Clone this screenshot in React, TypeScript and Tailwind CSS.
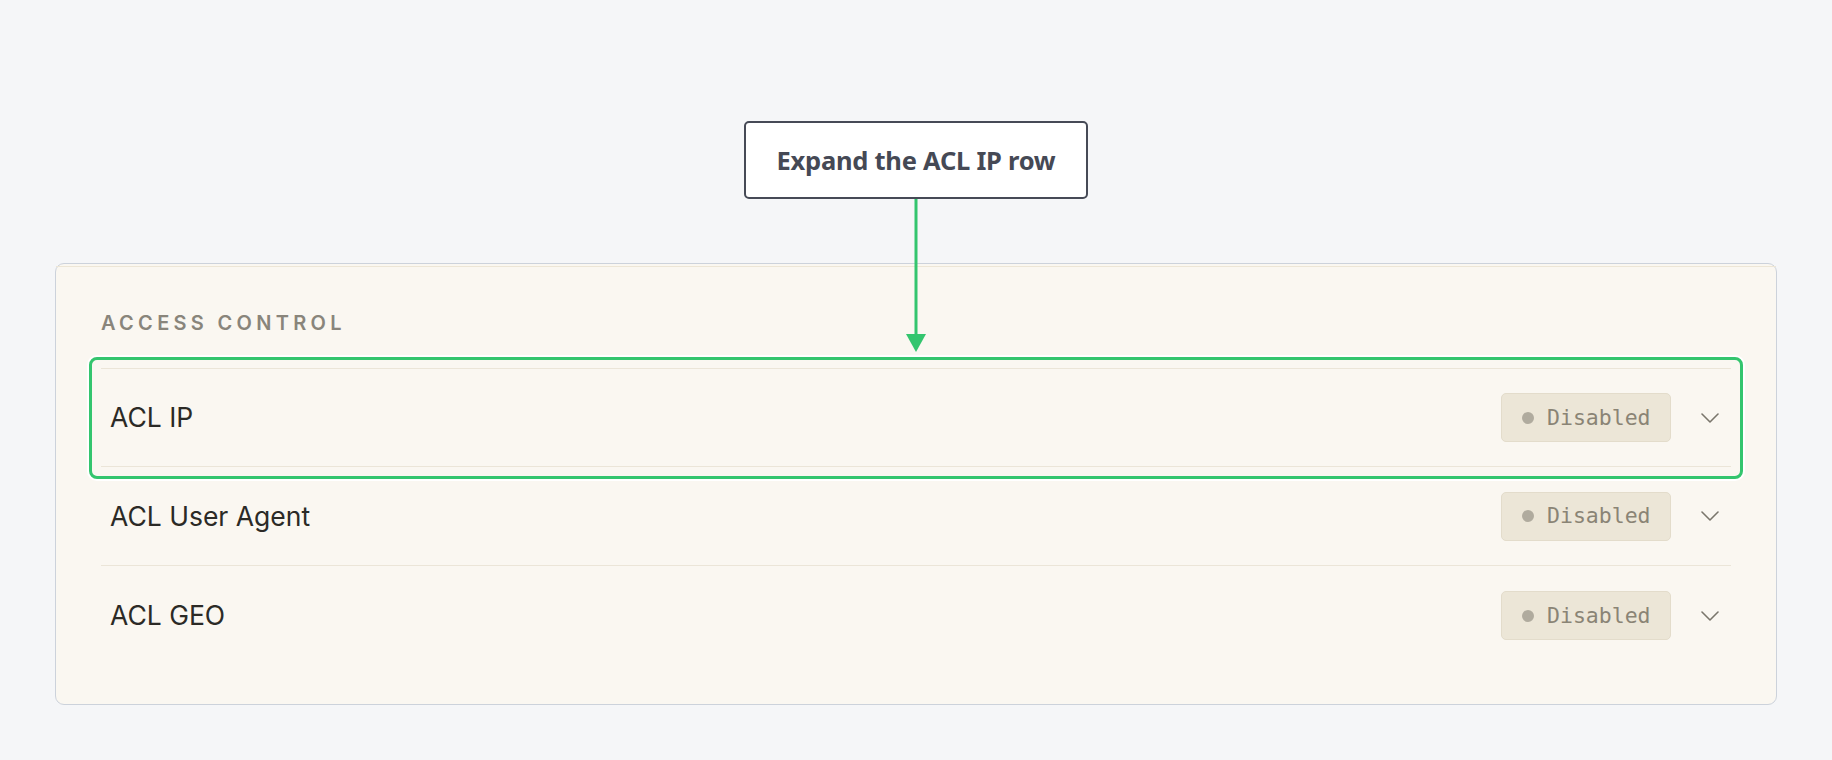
import React from 'react'

const rows = [
  { id: 'ip', label: 'ACL IP', status: 'Disabled' },
  { id: 'ua', label: 'ACL User Agent', status: 'Disabled' },
  { id: 'geo', label: 'ACL GEO', status: 'Disabled' },
]

function Chevron() {
  return (
    <svg width="18" height="10" viewBox="0 0 18 10" fill="none" className="text-[#7a766c]">
      <path d="M1 1l8 8 8-8" stroke="currentColor" strokeWidth="1.6" strokeLinecap="round" strokeLinejoin="round" />
    </svg>
  )
}

function StatusBadge({ label }: { label: string }) {
  return (
    <div className="flex h-[49px] w-[170px] items-center gap-[13px] rounded-[5px] border border-[#e3dccb] bg-[#ece6d7] pl-[20px]">
      <span className="h-[12px] w-[12px] rounded-full bg-[#b0ab9e]" />
      <span className="font-['DejaVu_Sans_Mono',monospace] text-[21.5px] leading-none text-[#8a8475]">{label}</span>
    </div>
  )
}

export default function App() {
  return (
    <div className="min-h-[760px] bg-[#f5f6f8] pt-[121px] font-['Inter',sans-serif]">
      {/* callout + arrow pointing into the list */}
      <div className="relative flex justify-center">
        <div className="flex h-[78px] w-[344px] items-center justify-center rounded-[5px] border-2 border-[#464a56] bg-white">
          <span className="font-['Noto_Sans',sans-serif] text-[25.5px] font-bold tracking-[-0.01em] text-[#454955]">Expand the ACL IP row</span>
        </div>
        <svg
          width="20"
          height="153"
          viewBox="0 0 20 153"
          className="absolute left-1/2 top-full z-10 -translate-x-1/2"
        >
          <line x1="10" y1="0" x2="10" y2="137" stroke="#33c56e" strokeWidth="3" />
          <polygon points="0,135 20,135 10,153" fill="#33c56e" />
        </svg>
      </div>

      <div className="mx-[55px] mt-[64px] rounded-[9px] border-[1.5px] border-[#ccd2db] bg-[#faf7f1]">
        <div className="mt-[2px] border-t-[1.5px] border-[#ede6d6] px-[45px] pb-[39px] pt-[42px]">
          <h2 className="text-[20px] font-semibold leading-[28px] tracking-[0.215em] text-[#89857b]">ACCESS CONTROL</h2>

          <div className="mt-[31px]">
            {rows.map((r, i) => (
              <div
                key={r.id}
                className={
                  'relative flex h-[99px] items-center justify-between pl-[9px] pr-[12px] ' +
                  (i === 0 ? 'border-t border-[#ebe5d8] ' : '') +
                  (i < rows.length - 1 ? 'border-b border-[#ebe5d8]' : '')
                }
              >
                <span className="text-[26.5px] leading-none text-[#2b2a26]">{r.label}</span>
                <div className="flex items-center gap-[30px]">
                  <StatusBadge label={r.status} />
                  <Chevron />
                </div>
                {i === 0 && (
                  <div className="pointer-events-none absolute -left-[12px] -right-[12px] -top-[12px] -bottom-[13px] rounded-[8px] border-[3px] border-[#33c56e] shadow-[0_0_0_2px_#ffffff]" />
                )}
              </div>
            ))}
          </div>
        </div>
      </div>
    </div>
  )
}
